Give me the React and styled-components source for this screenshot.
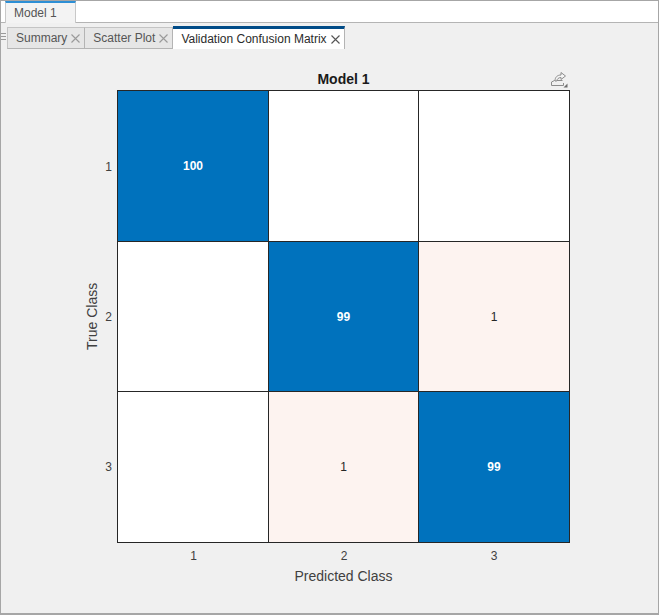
import React from 'react';
import styled, { createGlobalStyle } from 'styled-components';

const GlobalStyle = createGlobalStyle`
  html, body {
    margin: 0;
    padding: 0;
    background: #f0f0f0;
  }
  body {
    font-family: "Liberation Sans", Arial, sans-serif;
  }
`;

const Frame = styled.div`
  width: 659px;
  height: 615px;
  box-sizing: border-box;
  border: 1px solid #a6a6a6;
  border-bottom-width: 2px;
  display: flex;
  flex-direction: column;
  background: #f0f0f0;
  overflow: hidden;
`;

const DocBar = styled.div`
  height: 21px;
  flex: none;
  display: flex;
  padding-left: 4px;
  background: #fff;
  border-bottom: 1px solid #b4b4b4;
`;

const DocTab = styled.div`
  width: 71px;
  height: 22px;
  box-sizing: border-box;
  border-top: 2px solid #2d8fd5;
  border-left: 1px solid #c8c8c8;
  border-right: 1px solid #c8c8c8;
  background: #f3f3f3;
  color: #555;
  font-size: 12px;
  line-height: 20px;
  padding-left: 8px;
`;

const TabBar = styled.div`
  height: 26px;
  flex: none;
  display: flex;
  align-items: flex-end;
  padding-left: 6px;
  background: #f0f0f0;
  position: relative;
`;

const Grip = styled.div`
  position: absolute;
  left: 0;
  top: 10px;
  width: 5px;
  height: 9px;
  background: repeating-linear-gradient(#9a9a9a 0 1px, transparent 1px 3px);
`;

const Tab = styled.div`
  height: ${p => (p.$active ? '23px' : '22px')};
  box-sizing: border-box;
  display: flex;
  align-items: center;
  gap: 4px;
  padding: 0 4px 0 8px;
  border-top: ${p => (p.$active ? '3px solid #004b87' : '1px solid #c4c4c4')};
  border-right: 1px solid #b4b4b4;
  border-left: ${p => (p.$first ? '1px solid #c4c4c4' : '0')};
  border-bottom: ${p => (p.$active ? '0' : '1px solid #b4b4b4')};
  background: ${p => (p.$active ? '#fff' : '#e6e6e6')};
  color: ${p => (p.$active ? '#2b2b2b' : '#555')};
  font-size: 12px;
`;

const Close = styled.svg`
  width: 9px;
  height: 9px;
  flex: none;
  stroke: ${p => (p.$active ? '#555' : '#9a9a9a')};
  stroke-width: 1.1;
`;

const Canvas = styled.div`
  flex: 1;
  display: grid;
  grid-template-columns: 24px 13px 453px;
  grid-template-rows: 41px 453px 26px 22px;
  padding-left: 79px;
  background: #f0f0f0;
`;

const Title = styled.div`
  grid-column: 3;
  grid-row: 1;
  position: relative;
  display: flex;
  align-items: flex-end;
  justify-content: center;
  padding-bottom: 2px;
  font-size: 14px;
  font-weight: 700;
  line-height: 18px;
  color: #1a1a1a;
`;

const EditIcon = styled.svg`
  position: absolute;
  right: 2px;
  bottom: 2px;
  width: 18px;
  height: 17px;
`;

const YLabel = styled.div`
  grid-column: 1;
  grid-row: 2;
  writing-mode: vertical-rl;
  transform: rotate(180deg);
  text-align: center;
  font-size: 14px;
  line-height: 24px;
  color: #404040;
`;

const YTicks = styled.div`
  grid-column: 2;
  grid-row: 2;
  display: grid;
  grid-template-rows: 151px 150px 150px;
  padding: 1px 0;
  justify-items: end;
  align-items: center;
  padding-right: 5px;
  font-size: 12px;
  color: #404040;
`;

const Matrix = styled.div`
  grid-column: 3;
  grid-row: 2;
  display: grid;
  grid-template-columns: 151px 150px 150px;
  grid-template-rows: 151px 150px 150px;
  box-sizing: border-box;
  border: 1px solid #262626;
`;

const Cell = styled.div`
  display: flex;
  align-items: center;
  justify-content: center;
  background: ${p => p.$fill};
  color: ${p => (p.$strong ? '#fff' : '#262626')};
  font-size: 12px;
  font-weight: ${p => (p.$strong ? 700 : 400)};
  border-right: ${p => (p.$col < 2 ? '1px solid #262626' : '0')};
  border-bottom: ${p => (p.$row < 2 ? '1px solid #262626' : '0')};
`;

const XTicks = styled.div`
  grid-column: 3;
  grid-row: 3;
  display: grid;
  grid-template-columns: 151px 150px 150px;
  padding-left: 1px;
  justify-items: center;
  padding-top: 6px;
  font-size: 12px;
  line-height: 14px;
  color: #404040;
`;

const XLabel = styled.div`
  grid-column: 3;
  grid-row: 4;
  text-align: center;
  font-size: 14px;
  line-height: 14px;
  color: #404040;
`;

const matrix = [
  ['100', '', ''],
  ['', '99', '1'],
  ['', '1', '99'],
];

function fillFor(value) {
  if (value === '') return '#fff';
  return Number(value) > 50 ? '#0072bd' : '#fdf3f0';
}

function CloseIcon({ active }) {
  return (
    <Close $active={active} viewBox="0 0 9 9">
      <path d="M.5.5l8 8M8.5.5l-8 8" fill="none" />
    </Close>
  );
}

export default function App() {
  return (
    <>
      <GlobalStyle />
      <Frame>
        <DocBar>
          <DocTab>Model 1</DocTab>
        </DocBar>
        <TabBar>
          <Grip />
          <Tab $first>
            Summary
            <CloseIcon />
          </Tab>
          <Tab>
            Scatter Plot
            <CloseIcon />
          </Tab>
          <Tab $active>
            Validation Confusion Matrix
            <CloseIcon active />
          </Tab>
        </TabBar>
        <Canvas>
          <Title>
            Model 1
            <EditIcon viewBox="0 0 18 17">
              <path d="M1.500 14.500V11l3-1.500h8" fill="none" stroke="#8c8c8c" />
              <path d="M1.500 14.500h12V12" fill="none" stroke="#8c8c8c" />
              <path d="M5 10c0-4 2.500-6 6-6V1.500L15.500 5 11 8.500v-2C8.500 6.500 7 8 6.800 10z" fill="#f4f4f4" stroke="#8c8c8c" />
              <path d="M13.500 16.500l4-4v4z" fill="#6e6e6e" />
            </EditIcon>
          </Title>
          <YLabel>True Class</YLabel>
          <YTicks>
            <span>1</span>
            <span>2</span>
            <span>3</span>
          </YTicks>
          <Matrix>
            {matrix.map((row, r) =>
              row.map((value, c) => (
                <Cell
                  key={`${r}-${c}`}
                  $row={r}
                  $col={c}
                  $fill={fillFor(value)}
                  $strong={Number(value) > 50}
                >
                  {value}
                </Cell>
              ))
            )}
          </Matrix>
          <XTicks>
            <span>1</span>
            <span>2</span>
            <span>3</span>
          </XTicks>
          <XLabel>Predicted Class</XLabel>
        </Canvas>
      </Frame>
    </>
  );
}
